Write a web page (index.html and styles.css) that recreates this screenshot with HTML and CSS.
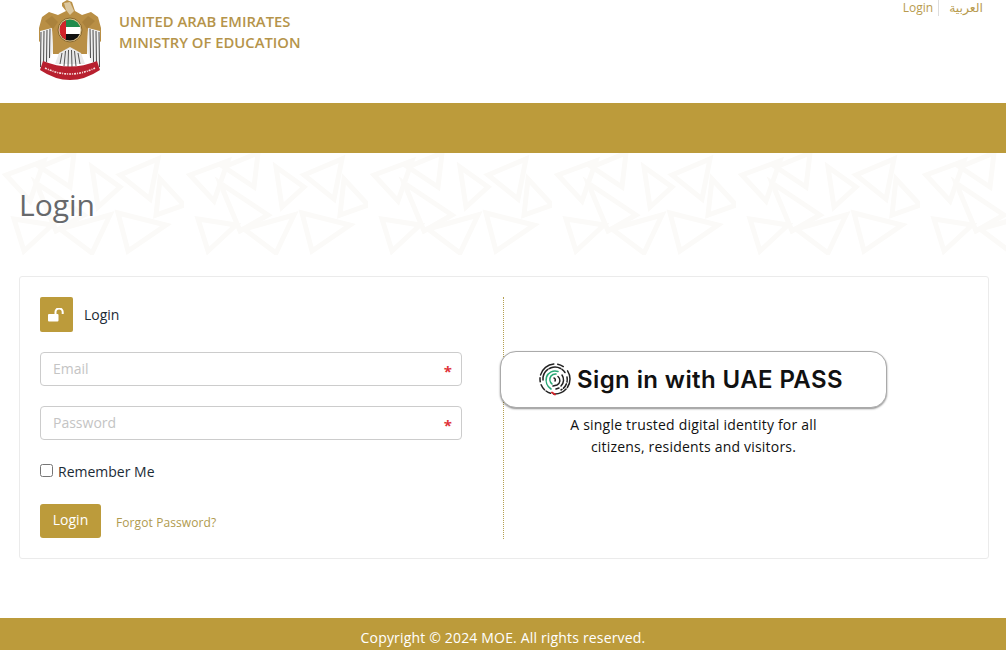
FILE: index.html
```html
<!DOCTYPE html>
<html>
<head>
<meta name="viewport" content="width=device-width, initial-scale=1">
<link rel="stylesheet" href="styles.css">
<title>Login</title>
</head>
<body>

<!-- header -->
<div class="header">
  <div class="brand">
    <svg class="emblem" width="64" height="82" viewBox="0 0 64 82">
      <!-- wings and body -->
      <path d="M24 3 L29 0 L34 2 L37 11 L44 15 L53 12 L60 17 L63 28 L63 42 L50 30 L49 54 L15 54 L14 30 L1 42 L1 28 L4 17 L11 12 L20 15 L28 11 L24 6 Z" fill="#b98f45"/>
      <path d="M26 3 L32 2 L36 11 L32 15 L28 10 Z" fill="#dcc8a0"/>
      <path d="M7 21 L14 16 L20 22 L15 29 Z" fill="#8f6b2c" opacity="0.35"/>
      <path d="M57 21 L50 16 L44 22 L49 29 Z" fill="#8f6b2c" opacity="0.35"/>
      <!-- wing feathers -->
      <path d="M2 31 L14 28 L15 50 L11 61 L2 70 Z" fill="#efefef"/>
      <path d="M62 31 L50 28 L49 50 L53 61 L62 70 Z" fill="#efefef"/>
      <g stroke="#4a4a4a" stroke-width="1" fill="none">
        <path d="M3 32 L2.500 67"/><path d="M6 31 L5.500 65"/><path d="M9 30 L8.500 62"/><path d="M12 29 L11.500 58"/>
        <path d="M61 32 L61.500 67"/><path d="M58 31 L58.500 65"/><path d="M55 30 L55.500 62"/><path d="M52 29 L52.500 58"/>
      </g>
      <!-- tail -->
      <path d="M17 64 L21 53 L32 47 L43 53 L47 64 Z" fill="#e9e9e9"/>
      <g stroke="#555" stroke-width="1" fill="none">
        <path d="M22 64 L24 53"/><path d="M26 66 L27.500 51"/><path d="M30 67 L30.500 50"/><path d="M34 67 L33.500 50"/><path d="M38 66 L36.500 51"/><path d="M42 64 L40 53"/>
      </g>
      <!-- shield -->
      <circle cx="32" cy="30" r="12" fill="#d9c08c" stroke="#8a6a30" stroke-width="1"/>
      <clipPath id="flag_clip"><circle cx="32" cy="30" r="10.500"/></clipPath>
      <g clip-path="url(#flag_clip)">
        <rect x="21" y="19" width="22" height="8" fill="#1f8a4c"/>
        <rect x="21" y="27" width="22" height="7" fill="#fff"/>
        <rect x="21" y="34" width="22" height="8" fill="#111"/>
        <rect x="21" y="19" width="7" height="23" fill="#d2232a"/>
      </g>
      <!-- ribbon -->
      <path d="M5 61 Q32 72 59 61 L62 70 Q32 90 2 70 Z" fill="#b8202f"/>
      <path d="M7 68 Q32 80 57 68" stroke="#f6dede" stroke-width="1.600" fill="none" stroke-dasharray="2 1 1 1"/>
    </svg>
    <div class="brand_name">UNITED ARAB EMIRATES<br>MINISTRY OF EDUCATION</div>
  </div>
  <div class="top_links">
    <a class="top_link top_link_first">Login</a>
    <a class="top_link top_link_ar" lang="ar" dir="rtl">العربية</a>
  </div>
</div>

<div class="banner"></div>

<!-- title strip with the faint triangle pattern -->
<div class="title_strip">
  <svg class="strip_pattern" width="1006" height="102">
    <defs>
      <pattern id="tri_tile" width="184" height="102" patternUnits="userSpaceOnUse">
        <g fill="none" stroke="#fbfaf8" stroke-width="5">
          <path d="M6 22 L44 8 L30 48 Z"/>
          <path d="M40 14 L74 0 L70 34 Z"/>
          <path d="M36 30 L84 62 L56 78 Z"/>
          <path d="M60 76 L110 62 L92 100 Z"/>
          <path d="M120 22 L158 6 L150 46 Z"/>
          <path d="M92 14 L120 34 L98 54 Z"/>
          <path d="M118 60 L166 72 L128 98 Z"/>
          <path d="M14 66 L52 72 L24 98 Z"/>
          <path d="M160 26 L184 52 L156 62 Z"/>
        </g>
      </pattern>
    </defs>
    <rect width="1006" height="102" fill="url(#tri_tile)"/>
  </svg>
  <h1 class="page_title">Login</h1>
</div>

<!-- login card -->
<div class="card">
  <div class="login_col">
    <div class="login_head">
      <span class="lock_box">
        <svg width="17" height="14" viewBox="0 0 17 14">
          <rect x="0" y="6" width="10.500" height="7.500" rx="1" fill="#fff"/>
          <path d="M7.500 6 V4 a3.600 3.600 0 0 1 7.200 0 V6" fill="none" stroke="#fff" stroke-width="2"/>
        </svg>
      </span>
      <span>Login</span>
    </div>
    <div class="field">
      <input class="text_input" type="text" placeholder="Email">
      <span class="required">*</span>
    </div>
    <div class="field">
      <input class="text_input" type="password" placeholder="Password">
      <span class="required">*</span>
    </div>
    <label class="remember"><input class="remember_box" type="checkbox"> Remember Me</label>
    <div class="actions">
      <button class="login_button">Login</button>
      <a class="forgot">Forgot Password?</a>
    </div>
  </div>

  <div class="pass_col">
    <div class="pass_button">
      <svg width="32" height="33" viewBox="0 0 32 33" fill="none" stroke-linecap="round">
        <g stroke="#222" stroke-width="1.500">
          <circle cx="16" cy="16" r="15" stroke-dasharray="9 2 14 3 5 2 6 3 4 3 18 4 6 6"/>
          <path d="M4 17 A12 12 0 0 1 26 9.500" stroke-dasharray="12 1.500"/>
          <path d="M28 14 A12 12 0 0 1 22 27" stroke-dasharray="5 2"/>
          <path d="M23 12 A8.500 8.500 0 0 1 22 23"/>
          <path d="M19 13.500 A5 5 0 0 1 18 22 L14 23"/>
          <path d="M17 26 L20 25"/>
        </g>
        <g stroke="#2aa876" stroke-width="1.600">
          <path d="M12 26 A11 11 0 0 1 7.500 14 A9 9 0 0 1 19 8.500"/>
          <path d="M13 21 A6 6 0 0 1 12 13 A6 6 0 0 1 17 11"/>
        </g>
        <path d="M16 18 A2 2 0 0 0 15 15" stroke="#222" stroke-width="1.500"/>
        <path d="M13 29.500 L16 31.500" stroke="#d2232a" stroke-width="2"/>
      </svg>
      <span class="pass_text">Sign in with UAE PASS</span>
    </div>
    <p class="pass_note">A single trusted digital identity for all<br>citizens, residents and visitors.</p>
  </div>
</div>

<div class="footer">Copyright © 2024 MOE. All rights reserved.</div>

</body>
</html>
```

FILE: styles.css
```css
* {box-sizing: border-box}

html, body {
  height: 650px;
  overflow: hidden;
}

body {
  margin: 0;
  background-color: #fff;
  font-family: "Open Sans", "DejaVu Sans", sans-serif;
  font-size: 14px;
  color: #1c2b36;
}

/* Header */
.header {
  display: flex;
  justify-content: space-between;
  height: 103px;
  padding-left: 38px;
  padding-right: 23px;
}

.brand {
  display: flex;
  align-items: flex-start;
}

.emblem {
  display: block;
}

.brand_name {
  margin-left: 17px;
  padding-top: 11px;
  font-size: 14.800px;
  font-weight: 600;
  line-height: 21px;
  color: #b5944a;
}

.top_links {
  display: flex;
  align-items: flex-start;
}

.top_link {
  font-size: 12px;
  line-height: 16px;
  color: #b89b4e;
}

.top_link_first {
  padding-right: 5px;
  margin-right: 10px;
  border-right: 1px solid #ddd;
}

.top_link_ar {
  font-size: 12.400px;
}

.banner {
  height: 50px;
  background-color: #bc9b3b;
}

/* Title strip */
.title_strip {
  position: relative;
  height: 102px;
  padding-left: 19px;
  padding-top: 31px;
}

.strip_pattern {
  position: absolute;
  left: 0;
  top: 0;
}

.page_title {
  position: relative;
  margin: 0;
  font-size: 30px;
  font-weight: 400;
  line-height: 41px;
  color: #67696c;
}

/* Card */
.card {
  display: flex;
  width: 970px;
  height: 283px;
  margin-top: 21px;
  margin-left: 19px;
  padding: 20px 20px;
  border: 1px solid #ebebeb;
  border-radius: 3px;
}

.login_col {
  width: 464px;
  height: 242px;
  padding-right: 41px;
  border-right: 1px dotted #b5a050;
}

.login_head {
  display: flex;
  align-items: center;
  gap: 11px;
  height: 35px;
  font-size: 14px;
}

.lock_box {
  display: flex;
  align-items: center;
  justify-content: center;
  width: 33px;
  height: 35px;
  background-color: #bc9b3b;
  border-radius: 2px;
}

.field {
  position: relative;
  margin-top: 20px;
}

.text_input {
  display: block;
  width: 100%;
  height: 34px;
  padding: 0 12px 2px;
  border: 1px solid #ccc;
  border-radius: 4px;
  font-family: inherit;
  font-size: 14px;
  color: #555;
}

.text_input::placeholder {
  color: #c4c4c4;
}

.required {
  position: absolute;
  right: 10px;
  top: 7px;
  font-size: 15px;
  font-weight: 700;
  line-height: 24px;
  color: #e0343a;
}

.remember {
  display: flex;
  align-items: center;
  gap: 5px;
  height: 20px;
  margin-top: 21px;
  font-size: 14px;
}

.remember_box {
  width: 13px;
  height: 13px;
  margin: 0 0 2px 0;
}

.actions {
  display: flex;
  align-items: center;
  margin-top: 23px;
}

.login_button {
  width: 61px;
  height: 34px;
  padding: 0 0 3px;
  border: none;
  border-radius: 3px;
  background-color: #bc9b3b;
  font-family: inherit;
  font-size: 14px;
  color: #fff;
}

.forgot {
  margin-left: 15px;
  margin-top: 3px;
  font-size: 12px;
  letter-spacing: 0.1px;
  color: #b09a4e;
}

/* UAE PASS side */
.pass_col {
  width: 387px;
  margin-left: -4px;
  padding-top: 54px;
}

.pass_button {
  display: flex;
  align-items: center;
  justify-content: center;
  gap: 6px;
  height: 57px;
  padding-right: 5px;
  border: 1px solid #aaa;
  border-radius: 16px;
  background-color: #fff;
  box-shadow: 0 1px 2px rgba(0, 0, 0, 0.45);
}

.pass_text {
  font-family: Inter, "Liberation Sans", sans-serif;
  font-size: 24px;
  font-weight: 600;
  letter-spacing: 0.4px;
  color: #111;
}

.pass_note {
  margin: 6px 0 0;
  font-size: 14px;
  letter-spacing: 0.2px;
  line-height: 22px;
  text-align: center;
  color: #111;
}

/* Footer */
.footer {
  height: 32px;
  margin-top: 59px;
  padding-top: 10px;
  background-color: #bc9b3b;
  font-size: 14px;
  letter-spacing: 0.17px;
  line-height: 20px;
  text-align: center;
  color: #fff;
}
```
